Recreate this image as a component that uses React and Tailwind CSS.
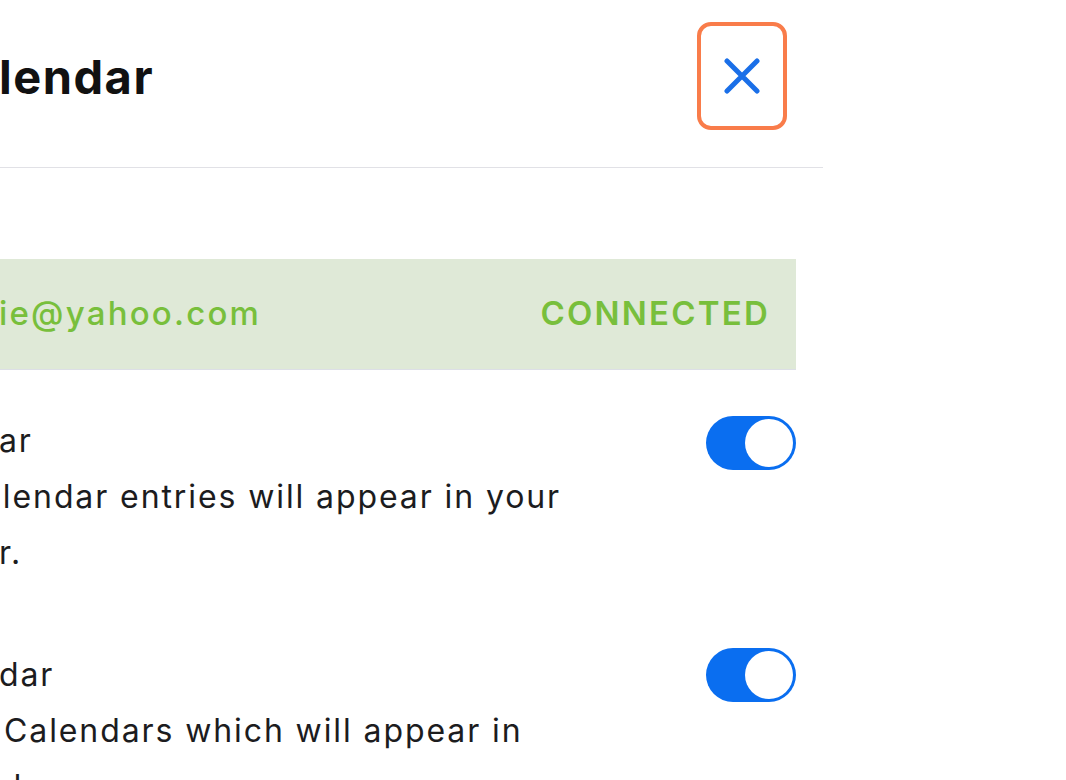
import { useState } from 'react';

function Toggle({ on, onChange }) {
  return (
    <button
      onClick={() => onChange(!on)}
      className={`flex items-center w-[90px] h-[54px] rounded-full p-[3px] shrink-0 ${on ? 'bg-[#0a6ef0] justify-end' : 'bg-[#d9d9de] justify-start'}`}
    >
      <span className="block w-[48px] h-[48px] rounded-full bg-white" />
    </button>
  );
}

export default function App() {
  const [showCal, setShowCal] = useState(true);
  const [syncCal, setSyncCal] = useState(true);

  return (
    <div className="w-[1066px] h-[780px] overflow-hidden bg-white text-[#1c1c1e]" style={{ fontFamily: 'Inter, "Noto Sans", sans-serif' }}>
      <div className="w-[823px]">
        <div className="flex items-center justify-between pt-[22px] pb-[37px] border-b border-[#e1e1e6]">
          <h1 className="text-[47px] font-bold leading-none tracking-[1.5px] text-[#111] -ml-[1px]">lendar</h1>
          <button className="mr-[36px] w-[90px] h-[108px] rounded-[14px] border-[4px] border-[#f97c4a] flex items-center justify-center">
            <svg width="36" height="36" viewBox="0 0 36 36" fill="none" stroke="#1a6fe8" strokeWidth="5" strokeLinecap="round">
              <path d="M3 3L33 33M33 3L3 33" />
            </svg>
          </button>
        </div>

        <div className="pr-[27px]">
          <div className="mt-[91px] h-[111px] bg-[#dfe9d7] border-b border-[#dcdfe6] flex items-center justify-between pr-[28px] text-[33px] font-medium text-[#78bf3c]">
            <span className="-ml-[1px] tracking-[2.2px]">ie@yahoo.com</span>
            <span className="font-semibold tracking-[2.2px] -mr-[2px]">CONNECTED</span>
          </div>

          <div className="mt-[43px] flex justify-between items-start">
            <div className="text-[32px] leading-[56px] tracking-[1.9px] whitespace-nowrap">
              <div className="-ml-[1px]">ar</div>
              <div className="-ml-[17px]">alendar entries will appear in your</div>
              <div className="-ml-[1px]">r.</div>
            </div>
            <div className="mt-[3px]">
              <Toggle on={showCal} onChange={setShowCal} />
            </div>
          </div>

          <div className="mt-[66px] flex justify-between items-start">
            <div className="text-[32px] leading-[56px] tracking-[1.9px] whitespace-nowrap">
              <div className="-ml-[1px]">dar</div>
              <div className="ml-[4px]">Calendars which will appear in</div>
              <div className="-ml-[19px]">ndar:</div>
            </div>
            <div className="mt-[1px]">
              <Toggle on={syncCal} onChange={setSyncCal} />
            </div>
          </div>
        </div>
      </div>
    </div>
  );
}
